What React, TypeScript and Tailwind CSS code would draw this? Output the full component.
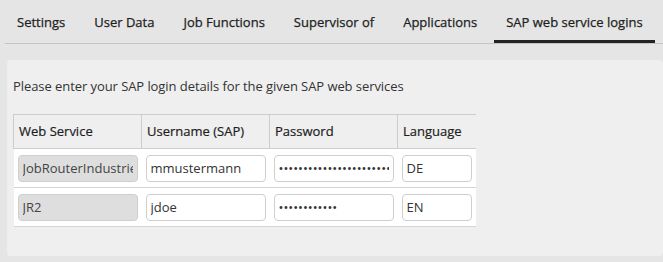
import React from 'react'

const tabs = ['Settings', 'User Data', 'Job Functions', 'Supervisor of', 'Applications', 'SAP web service logins']

const rows = [
  { service: 'JobRouterIndustries', user: 'mmustermann', pass: 'xxxxxxxxxxxxxxxxxxxxxxxx', lang: 'DE' },
  { service: 'JR2', user: 'jdoe', pass: 'xxxxxxxxxxxx', lang: 'EN' },
]

export default function App() {
  const inputCls = 'w-full h-[27px] rounded-[4px] border border-[#cfcfcf] px-[4px] text-[13px] text-[#333] outline-none'

  return (
    <div className="h-[262px] w-[663px] overflow-hidden bg-[#e5e5e5] text-[#333]" style={{ fontFamily: '"Open Sans", sans-serif' }}>
      <ul className="ml-[5px] flex h-[44px] border-b border-[#c4c4c4]">
        {tabs.map((t, i) => (
          <li
            key={t}
            className={`mr-[5px] flex items-center px-[12px] pt-[2px] text-[13px] text-[#1e1e1e] [-webkit-text-stroke:0.25px_#1e1e1e] ${i === tabs.length - 1 ? 'border-b-[3px] border-[#222] pt-[5px]' : ''}`}
          >
            {t}
          </li>
        ))}
      </ul>

      <div className="ml-[7px] mt-[16px] h-[196px] rounded-[4px] bg-[#efefef] pl-[6px] pt-[16px]">
        <p className="text-[13px] leading-[20px] tracking-[-0.07px]">Please enter your SAP login details for the given SAP web services</p>

        <table className="mt-[18px] w-[462px] table-fixed border-collapse text-[13px]">
          <colgroup>
            <col className="w-[128px]" />
            <col className="w-[128px]" />
            <col className="w-[128px]" />
            <col className="w-[78px]" />
          </colgroup>
          <thead>
            <tr className="h-[34px] border-y border-[#cdcdcd] text-[#1e1e1e] [-webkit-text-stroke:0.2px_#1e1e1e]">
              <th className="border-l border-[#cdcdcd] px-[5px] text-left font-normal">Web Service</th>
              <th className="border-l border-[#cdcdcd] px-[5px] text-left font-normal">Username (SAP)</th>
              <th className="border-l border-[#cdcdcd] px-[5px] text-left font-normal">Password</th>
              <th className="border-l border-[#cdcdcd] px-[5px] text-left font-normal">Language</th>
            </tr>
          </thead>
          <tbody>
            {rows.map((r) => (
              <tr key={r.service} className="h-[39px] border-b border-[#d4d4d4] bg-white">
                <td className="px-[4px]">
                  <input readOnly value={r.service} className={`${inputCls} bg-[#dedede] border-[#c4c4c4] text-[#444]`} />
                </td>
                <td className="px-[4px]">
                  <input readOnly value={r.user} className={`${inputCls} bg-white`} />
                </td>
                <td className="px-[4px]">
                  <input readOnly type="password" value={r.pass} className={`${inputCls} bg-white`} />
                </td>
                <td className="px-[4px]">
                  <input readOnly value={r.lang} className={`${inputCls} bg-white`} />
                </td>
              </tr>
            ))}
          </tbody>
        </table>
      </div>
    </div>
  )
}
